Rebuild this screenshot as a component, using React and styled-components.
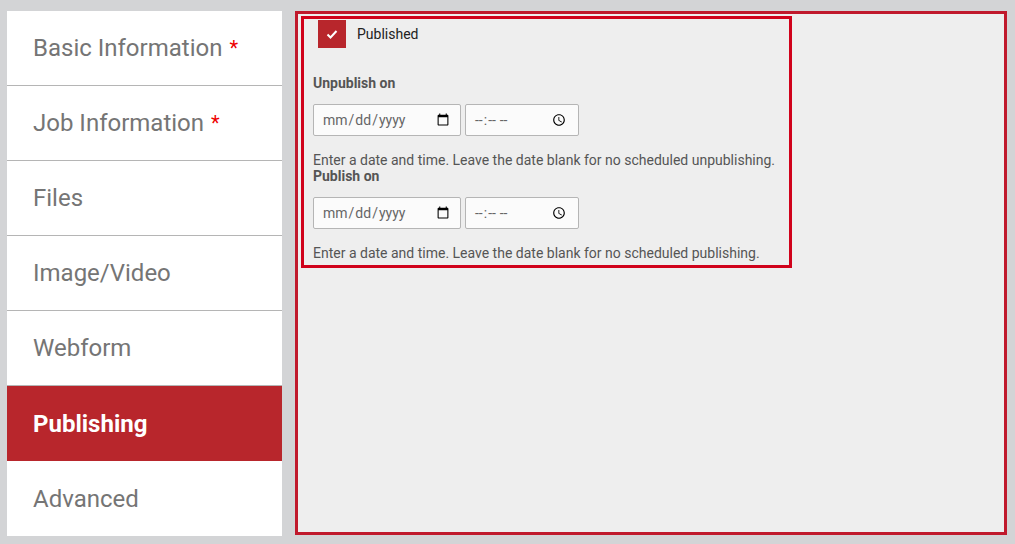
import React from "react";
import styled, { createGlobalStyle } from "styled-components";

const Global = createGlobalStyle`
  html, body { margin: 0; padding: 0; background: #d3d4d6; }
  body { font-family: Roboto, "Liberation Sans", sans-serif; }
`;

const Page = styled.div`
  display: flex;
  align-items: flex-start;
  gap: 13px;
  padding: 11px 8px 0 7px;
  height: 544px;
  box-sizing: border-box;
`;

const Sidebar = styled.div`
  width: 275px;
  display: flex;
  flex-direction: column;
  background: #fff;
`;

const Tab = styled.div`
  height: 75px;
  box-sizing: border-box;
  display: flex;
  align-items: center;
  padding-left: 26px;
  font-size: 24px;
  color: ${p => (p.active ? "#fff" : "#757575")};
  font-weight: ${p => (p.active ? 700 : 400)};
  background: ${p => (p.active ? "#b8262c" : "#fff")};
  border-bottom: ${p => (p.last || p.active ? "none" : "1px solid #b5b5b5")};
`;

const Star = styled.span`
  color: #e00;
  font-size: 20px;
  margin-left: 7px;
  align-self: flex-start;
  margin-top: 25px;
`;

const Main = styled.div`
  flex: 1;
  height: 524px;
  box-sizing: border-box;
  border: 3px solid #c0192c;
  background: #eee;
  padding: 2px 3px;
`;

const Group = styled.div`
  width: 491px;
  box-sizing: border-box;
  border: 3px solid #d0021b;
  padding: 1px 0 4px 9px;
  color: #555;
  font-size: 14px;
`;

const CheckRow = styled.div`
  display: flex;
  align-items: center;
  gap: 11px;
  padding-left: 5px;
  color: #222;
`;

const Box = styled.div`
  width: 28px;
  height: 28px;
  background: #b8262c;
  display: flex;
  align-items: center;
  justify-content: center;
`;

const Label = styled.div`
  font-weight: 700;
  margin: ${p => p.first ? "27px" : "0"} 0 13px;
`;

const Inputs = styled.div`
  display: flex;
  gap: 4px;
`;

const Field = styled.input`
  box-sizing: border-box;
  height: 32px;
  width: ${p => p.w}px;
  border: 1px solid #b5b5b5;
  border-radius: 2px;
  background: #fbfbfb;
  font-family: Roboto, "Liberation Sans", sans-serif;
  font-size: 14px;
  color: #666;
  padding: 0 8px;
`;

const Help = styled.div`
  margin-top: 16px;
`;

const tabs = ["Basic Information", "Job Information", "Files", "Image/Video", "Webform", "Publishing", "Advanced"];

const Schedule = ({ label, help, first }) => (
  <>
    <Label first={first}>{label}</Label>
    <Inputs>
      <Field type="date" w={148} />
      <Field type="time" w={114} />
    </Inputs>
    <Help>{help}</Help>
  </>
);

export default function App() {
  return (
    <Page>
      <Global />
      <Sidebar>
        {tabs.map((t, i) => (
          <Tab key={t} active={t === "Publishing"} last={i === tabs.length - 1}>
            {t}
            {i < 2 && <Star>*</Star>}
          </Tab>
        ))}
      </Sidebar>
      <Main>
        <Group>
          <CheckRow>
            <Box>
              <svg width="14" height="14" viewBox="0 0 14 14">
                <path d="M2.5 7.5l3 3 6-6.5" stroke="#fff" strokeWidth="2" fill="none" />
              </svg>
            </Box>
            Published
          </CheckRow>
          <Schedule first label="Unpublish on" help="Enter a date and time. Leave the date blank for no scheduled unpublishing." />
          <Schedule label="Publish on" help="Enter a date and time. Leave the date blank for no scheduled publishing." />
        </Group>
      </Main>
    </Page>
  );
}
